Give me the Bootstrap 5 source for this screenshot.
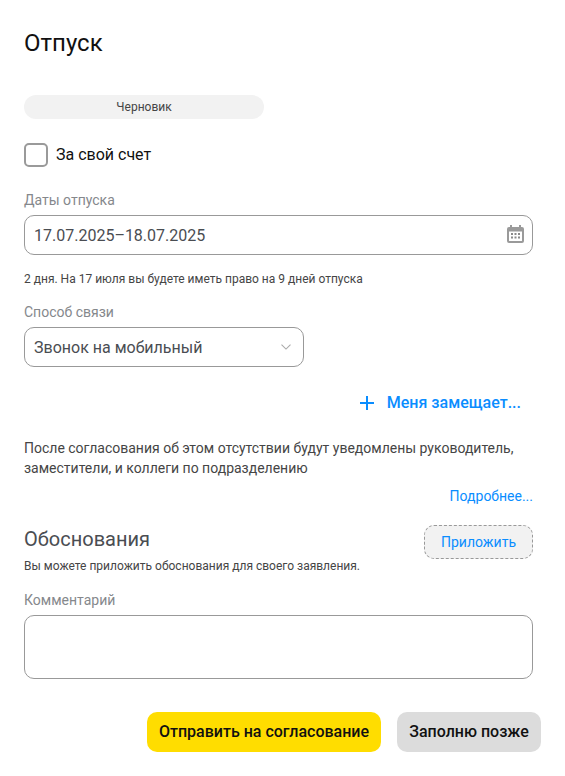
<!DOCTYPE html>
<html lang="ru">
<head>
<meta charset="utf-8">
<title>Отпуск</title>
<link href="https://cdn.jsdelivr.net/npm/bootstrap@5.3.0/dist/css/bootstrap.min.css" rel="stylesheet">
<style>
html, body { height: 100%; }
body { font-family: Roboto, "Liberation Sans", sans-serif; background: #fff; color: #454545; overflow: hidden; }
.sheet { width: 565px; padding: 0 32px 0 24px; }
.page-title { font-size: 24px; line-height: 32px; font-weight: 400; color: #111; margin: 27px 0 36px; }
.status-pill { width: 240px; height: 24px; border-radius: 12px; background: #f2f2f2; font-size: 12px; line-height: 24px; text-align: center; color: #454545; margin-bottom: 24px; }
.own-check { height: 24px; margin-bottom: 23px; }
.own-check .form-check-input { width: 24px; height: 24px; margin: 0; border: 2px solid #9a9a9a; border-radius: 5px; float: none; }
.own-check .form-check-label { font-size: 16px; line-height: 24px; color: #111; margin-left: 8px; }
.field-label { font-size: 14px; line-height: 20px; color: #85888c; margin: 0 0 5px; display: block; }
.field-box.form-control, .field-box.form-select { height: 40px; font-size: 16px; line-height: 24px; color: #4a4d52; border: 1px solid #999; border-radius: 10px; padding: 7px 40px 7px 9px; background-color: #fff; }
.date-wrap { position: relative; }
.date-icon { position: absolute; right: 9px; top: 10px; width: 17px; height: 18px; }
.note-small { font-size: 12px; line-height: 16px; color: #454545; }
.note-days { margin-top: 16px; }
.label-contact { margin-top: 15px; }
.contact-select.field-box.form-select { width: 280px; padding-top: 8px; padding-bottom: 6px; background-image: url("data:image/svg+xml,%3csvg xmlns='http://www.w3.org/2000/svg' viewBox='0 0 10 5.6'%3e%3cpath fill='none' stroke='%23aaa' stroke-width='1.1' d='M.5.5l4.5 4.4L9.500.5'/%3e%3c/svg%3e"); background-size: 10px 6px; background-position: right 12px center; }
.substitute { height: 24px; margin: 24px 12px 0 0; color: #0a8dff; font-size: 16px; font-weight: 500; line-height: 24px; gap: 12px; text-decoration: none; }
.notice-text { font-size: 14px; line-height: 20px; color: #454545; margin: 23px 0 6px; }
.more-link { font-size: 14px; line-height: 20px; color: #0a8dff; text-decoration: none; }
.section-row { margin-top: 17px; }
.section-title { font-size: 20px; line-height: 28px; font-weight: 400; color: #4a4d52; margin: 0; }
.section-note { margin-top: -1px; }
.attach-btn.btn { width: 109px; height: 34px; padding: 0; font-size: 14px; line-height: 32px; color: #0a8dff; background: #f2f2f2; border: 1px dashed #999; border-radius: 10px; }
.comment-box.form-control { height: 64px; border: 1px solid #999; border-radius: 10px; resize: none; }
.send-btn.btn, .later-btn.btn { height: 40px; padding: 0; font-size: 16px; font-weight: 500; line-height: 40px; color: #111; border: 0; border-radius: 10px; }
.send-btn.btn { width: 234px; background: #ffdd00; }
.later-btn.btn { width: 144px; background: #dcdcdc; }
.action-row { width: 517px; margin-top: 33px; }
</style>
</head>
<body>
<div class="sheet">
  <h1 class="page-title">Отпуск</h1>
  <div class="status-pill">Черновик</div>
  <div class="own-check d-flex align-items-center">
    <input class="form-check-input" type="checkbox" id="own">
    <label class="form-check-label" for="own">За свой счет</label>
  </div>

  <label class="field-label" for="dates">Даты отпуска</label>
  <div class="date-wrap">
    <input id="dates" class="form-control field-box" type="text" value="17.07.2025–18.07.2025">
    <svg class="date-icon" viewBox="0 0 17 18" aria-hidden="true">
      <path fill="#9a9a9a" fill-rule="evenodd" d="M3 0h2v2h7V0h2v2h1a2 2 0 0 1 2 2v12a2 2 0 0 1-2 2H2a2 2 0 0 1-2-2V4a2 2 0 0 1 2-2h1V0zM2 6.500V15.500a.5.5 0 0 0 .5.5h12a.5.5 0 0 0 .5-.5V6.500H2z"/>
      <path fill="#8a8a8a" d="M4 8h2v2H4zM7.500 8h2v2h-2zM11 8h2v2h-2zM4 11.500h2v2H4zM7.500 11.500h2v2h-2zM11 11.500h2v2h-2z"/>
    </svg>
  </div>
  <div class="note-small note-days">2 дня. На 17 июля вы будете иметь право на 9 дней отпуска</div>

  <label class="field-label label-contact" for="contact">Способ связи</label>
  <select id="contact" class="form-select field-box contact-select">
    <option>Звонок на мобильный</option>
  </select>

  <div class="d-flex justify-content-end">
    <a class="substitute d-inline-flex align-items-center" href="#">
      <svg width="16" height="16" viewBox="0 0 16 16" aria-hidden="true"><path fill="none" stroke="#0a8dff" stroke-width="2" d="M8 1v14M1 8h14"/></svg>
      <span>Меня замещает...</span>
    </a>
  </div>

  <p class="notice-text">После согласования об этом отсутствии будут уведомлены руководитель, заместители, и коллеги по подразделению</p>
  <div class="text-end"><a class="more-link" href="#">Подробнее...</a></div>

  <div class="section-row d-flex justify-content-between align-items-start">
    <h2 class="section-title">Обоснования</h2>
    <button type="button" class="btn attach-btn">Приложить</button>
  </div>
  <div class="note-small section-note mb-3">Вы можете приложить обоснования для своего заявления.</div>

  <label class="field-label" for="comment">Комментарий</label>
  <textarea id="comment" class="form-control comment-box"></textarea>

  <div class="action-row d-flex justify-content-end gap-3">
    <button type="button" class="btn send-btn">Отправить на согласование</button>
    <button type="button" class="btn later-btn">Заполню позже</button>
  </div>
</div>
<script src="https://cdn.jsdelivr.net/npm/bootstrap@5.3.0/dist/js/bootstrap.bundle.min.js"></script>
</body>
</html>
